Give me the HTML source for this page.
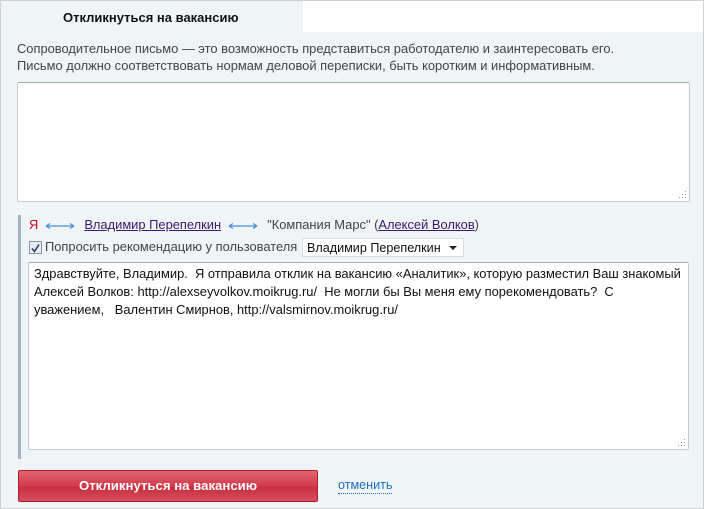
<!DOCTYPE html>
<html><head><meta charset="utf-8"><style>
body{margin:0;width:704px;height:509px;overflow:hidden;background:#fff;font-family:"Liberation Sans",Arial,sans-serif;}
.wrap{position:absolute;left:0;top:0;width:702px;height:507px;border:1px solid #cfd3d6;background:#eff4f7;}
.white{position:absolute;left:302px;top:0;width:400px;height:31px;background:#fff;}
.tab{position:absolute;left:62px;top:9px;font-size:13px;font-weight:bold;color:#111;}
.desc{position:absolute;left:16px;top:39px;font-size:12.9px;color:#444;line-height:17px;}
.ta{position:absolute;background:#fff;border:1px solid #c6cacd;border-top-color:#a9adb0;border-radius:2px;}
.grip{position:absolute;right:2px;bottom:2px;width:8px;height:8px;}
.bar{position:absolute;left:17px;top:214px;width:3px;height:244px;background:#a3b3c2;}
.row1{position:absolute;left:28px;top:216px;font-size:12.9px;color:#444;white-space:nowrap;}
.row1 a{color:#3a1b6a;text-decoration:underline;}
.red{color:#d0021b;}
.arr{display:inline-block;width:30px;height:8px;vertical-align:middle;margin:0 9px 0 7px;}
.row2{position:absolute;left:28px;top:238px;font-size:12.9px;color:#444;white-space:nowrap;}
.cb{position:absolute;left:0;top:2px;width:11px;height:11px;border:1px solid #8a96a3;background:#e8edf3;}
.sel{position:absolute;left:273px;top:-1px;width:162px;height:19px;background:#fff;border:1px solid #d8dcdf;font-size:12.6px;color:#111;line-height:19px;padding-left:4px;box-sizing:border-box;}
.msg{padding:2px 5px;font-size:12.9px;color:#111;line-height:18px;}
.btn{position:absolute;left:17px;top:469px;width:298px;height:30px;border:1px solid #b01c2c;border-radius:2px;background:linear-gradient(#e06674,#d43a4b 50%,#c72e3f 55%,#d6505e);color:#fff;font-size:13.2px;font-weight:bold;text-align:center;line-height:30px;}
.cancel{position:absolute;left:337px;top:477px;font-size:12.6px;color:#1d6fc0;border-bottom:1px dotted #1d6fc0;line-height:15px;}
</style></head><body>
<div class="wrap">
<div class="white"></div>
<div class="tab">Откликнуться на вакансию</div>
<div class="desc">Сопроводительное письмо — это возможность представиться работодателю и заинтересовать его.<br>Письмо должно соответствовать нормам деловой переписки, быть коротким и информативным.</div>
<div class="ta" style="left:16px;top:81px;width:671px;height:118px"><svg class="grip" viewBox="0 0 8 8"><g fill="#999"><rect x="6" y="0" width="1" height="1"/><rect x="3" y="3" width="1" height="1"/><rect x="6" y="3" width="1" height="1"/><rect x="0" y="6" width="1" height="1"/><rect x="3" y="6" width="1" height="1"/><rect x="6" y="6" width="1" height="1"/></g></svg></div>
<div class="bar"></div>
<div class="row1"><span class="red">Я</span><svg class="arr" viewBox="0 0 30 8"><path d="M1 4H29M1 4L5 1.5M1 4L5 6.5M29 4L25 1.5M29 4L25 6.5" stroke="#4a8fd6" stroke-width="1.2" fill="none"/></svg><a href="#">Владимир Перепелкин</a><svg class="arr" viewBox="0 0 30 8"><path d="M1 4H29M1 4L5 1.5M1 4L5 6.5M29 4L25 1.5M29 4L25 6.5" stroke="#4a8fd6" stroke-width="1.2" fill="none"/></svg>"Компания Марс" (<a href="#">Алексей Волков</a>)</div>
<div class="row2"><div class="cb"><svg width="11" height="11" viewBox="0 0 11 11"><path d="M2 5.5L4.5 8.5L9 1.5" stroke="#2b3e66" stroke-width="1.6" fill="none"/></svg></div><span style="margin-left:16px">Попросить рекомендацию у пользователя</span><div class="sel">Владимир Перепелкин<svg style="position:absolute;right:6px;top:7px" width="8" height="5"><path d="M0 0H8L4 4Z" fill="#222"/></svg></div></div>
<div class="ta" style="left:27px;top:261px;width:659px;height:186px"><div class="msg">Здравствуйте, Владимир.&nbsp; Я отправила отклик на вакансию «Аналитик», которую разместил Ваш знакомый Алексей Волков: http://alexseyvolkov.moikrug.ru/&nbsp; Не могли бы Вы меня ему порекомендовать?&nbsp; С уважением,&nbsp;&nbsp; Валентин Смирнов, http://valsmirnov.moikrug.ru/</div><svg class="grip" viewBox="0 0 8 8"><g fill="#999"><rect x="6" y="0" width="1" height="1"/><rect x="3" y="3" width="1" height="1"/><rect x="6" y="3" width="1" height="1"/><rect x="0" y="6" width="1" height="1"/><rect x="3" y="6" width="1" height="1"/><rect x="6" y="6" width="1" height="1"/></g></svg></div>
<div class="btn">Откликнуться на вакансию</div>
<div class="cancel">отменить</div>
</div>
</body></html>
